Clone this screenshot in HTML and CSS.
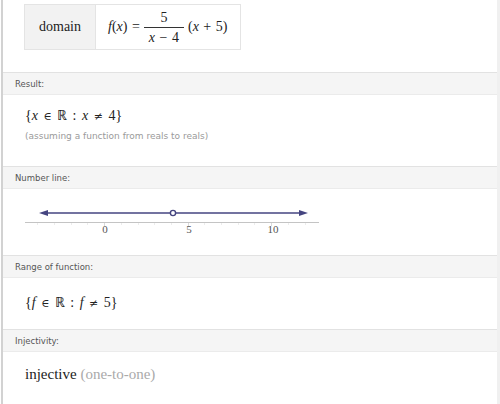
FILE: index.html
```html
<!DOCTYPE html>
<html>
<head>
<meta charset="utf-8">
<link rel="stylesheet" href="styles.css">
</head>
<body>
<div class="page">
  <div class="top">
    <div class="input">
      <div class="cell label">domain</div>
      <div class="cell formula">
        <span class="m"><i>f</i>(<i>x</i>) =</span>
        <span class="frac"><span class="num">5</span><span class="den"><i>x</i> − 4</span></span>
        <span class="m">(<i>x</i> + 5)</span>
      </div>
    </div>
  </div>

  <div class="pod">
    <div class="pod-head">Result:</div>
    <div class="pod-body result">
      <div class="math">{<i>x</i> <span class="sym">∈</span> ℝ : <i>x</i> <span class="sym">≠</span> 4}</div>
      <div class="note">(assuming a function from reals to reals)</div>
    </div>
  </div>

  <div class="pod">
    <div class="pod-head">Number line:</div>
    <div class="pod-body numline">
      <svg width="494" height="67" viewBox="0 0 494 67">
        <line x1="22" y1="33.5" x2="316" y2="33.5" stroke="#c4c4c4" stroke-width="1"/>
        <g stroke="#ececec" stroke-width="1">
          <line x1="34.5" y1="34" x2="34.5" y2="36"/>
          <line x1="51.5" y1="34" x2="51.5" y2="36"/>
          <line x1="68.5" y1="34" x2="68.5" y2="36"/>
          <line x1="84.5" y1="34" x2="84.5" y2="36"/>
          <line x1="118.5" y1="34" x2="118.5" y2="36"/>
          <line x1="135.5" y1="34" x2="135.5" y2="36"/>
          <line x1="151.5" y1="34" x2="151.5" y2="36"/>
          <line x1="168.5" y1="34" x2="168.5" y2="36"/>
          <line x1="201.5" y1="34" x2="201.5" y2="36"/>
          <line x1="218.5" y1="34" x2="218.5" y2="36"/>
          <line x1="235.5" y1="34" x2="235.5" y2="36"/>
          <line x1="251.5" y1="34" x2="251.5" y2="36"/>
          <line x1="285.5" y1="34" x2="285.5" y2="36"/>
          <line x1="302.5" y1="34" x2="302.5" y2="36"/>
        </g>
        <g stroke="#dadada" stroke-width="1">
          <line x1="101.5" y1="34" x2="101.5" y2="37"/>
          <line x1="185.5" y1="34" x2="185.5" y2="37"/>
          <line x1="268.5" y1="34" x2="268.5" y2="37"/>
        </g>
        <g font-family="Liberation Serif, serif" font-size="11" fill="#555" text-anchor="middle">
          <text x="102" y="44">0</text>
          <text x="186" y="44">5</text>
          <text x="270" y="44">10</text>
        </g>
        <line x1="42" y1="24" x2="299" y2="24" stroke="#454580" stroke-width="1.6"/>
        <polygon points="36,24 45,21 45,27" fill="#454580"/>
        <polygon points="305,24 296,21 296,27" fill="#454580"/>
        <circle cx="170" cy="24" r="2.6" fill="#fff" stroke="#454580" stroke-width="1.4"/>
      </svg>
    </div>
  </div>

  <div class="pod">
    <div class="pod-head">Range of function:</div>
    <div class="pod-body range">
      <div class="math">{<i>f</i> <span class="sym">∈</span> ℝ : <i>f</i> <span class="sym">≠</span> 5}</div>
    </div>
  </div>

  <div class="pod">
    <div class="pod-head">Injectivity:</div>
    <div class="pod-body inj">
      <div class="big">injective <span class="grey">(one-to-one)</span></div>
    </div>
  </div>
</div>
</body>
</html>
```

FILE: styles.css
```css
html, body {
  margin: 0;
  padding: 0;
  background: #fff;
}
.page {
  margin-left: 1px;
  width: 494px;
  height: 404px;
  border-left: 2px solid #d2d2d2;
  border-right: 3px solid #f0f0f0;
  overflow: hidden;
  font-family: "Liberation Serif", serif;
}
.top {
  height: 72px;
  padding-top: 4px;
  box-sizing: border-box;
}
.input {
  display: flex;
  margin-left: 21px;
  width: 217px;
  height: 46px;
  border: 1px solid #e4e4e4;
  box-sizing: border-box;
}
.cell {
  display: flex;
  align-items: center;
  font-size: 14px;
  color: #222;
}
.label {
  width: 70px;
  justify-content: center;
  background: #f2f2f2;
  border-right: 1px solid #e4e4e4;
}
.formula {
  flex: 1;
  padding-left: 12px;
  gap: 4px;
  word-spacing: 1px;
}
.frac {
  display: inline-flex;
  flex-direction: column;
  align-items: center;
  line-height: 15px;
  margin: 0 2px;
}
.num {
  padding: 0 2px 2px;
  border-bottom: 1px solid #333;
  width: 100%;
  text-align: center;
}
.den {
  padding: 2px 3px 0;
}
.pod-head {
  height: 21px;
  border-top: 1px solid #e2e2e2;
  border-bottom: 1px solid #ebebeb;
  background: #f5f5f5;
  font-family: "DejaVu Sans", sans-serif;
  font-size: 8.5px;
  color: #555;
  display: flex;
  align-items: center;
  padding-left: 12px;
}
.pod-body {
  box-sizing: border-box;
  padding-left: 22px;
}
.result {
  height: 71px;
  padding-top: 12px;
}
.math {
  font-size: 14px;
  color: #222;
  line-height: 18px;
  word-spacing: 2px;
}
.sym {
  font-family: "DejaVu Serif", serif;
  font-size: 11px;
}
.note {
  margin-top: 5px;
  font-family: "DejaVu Sans", sans-serif;
  font-size: 9px;
  color: #9a9a9a;
}
.numline {
  height: 66px;
  padding-left: 0;
}
.numline svg {
  display: block;
}
.range {
  height: 51px;
  padding-top: 16px;
}
.inj {
  height: 52px;
  padding-top: 14px;
}
.big {
  font-size: 15px;
  color: #222;
}
.grey {
  color: #aaa;
}
```
